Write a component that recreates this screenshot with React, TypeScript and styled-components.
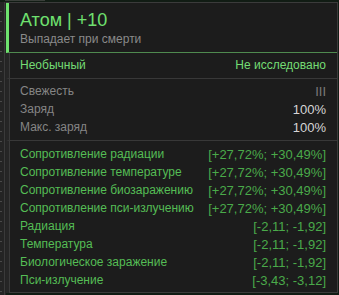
import React from "react";
import styled, { createGlobalStyle } from "styled-components";

const GlobalStyle = createGlobalStyle`
  html, body { margin: 0; padding: 0; background: #111c14; }
  body { font-family: "Liberation Sans", Arial, sans-serif; }
`;

const Frame = styled.div`
  width: 339px;
  height: 295px;
  display: flex;
  flex-direction: column;
  background: #111c14;
  overflow: hidden;
`;

const TopStrip = styled.div`
  height: 2px;
  display: flex;
`;

const TabHint = styled.div`
  width: 40px;
  margin-left: 5px;
  height: 1px;
  background: #3a3f3a;
`;

const Body = styled.div`
  flex: 1;
  display: flex;
  min-height: 0;
`;

const Ruler = styled.div`
  width: 6px;
  background:
    repeating-linear-gradient(to bottom, transparent 0 9px, #4a4a4a 9px 10px) 0 0 / 2px 100% no-repeat,
    linear-gradient(#3a3a3a, #3a3a3a) 4px 0 / 1px 100% no-repeat,
    #242424;
`;

const Panel = styled.div`
  flex: 1;
  display: flex;
  flex-direction: column;
  background: #1c1c1c;
  border-top: 1px solid #3b3b3b;
  border-right: 1px solid #3b3b3b;
  border-bottom: 1px solid #3b3b3b;
  margin-bottom: 2px;
`;

const Gutter = styled.div`
  width: 1px;
`;

const Header = styled.div`
  display: flex;
  flex-direction: column;
  border-left: 3px solid #6ee26e;
  padding: 6px 11px 5px 11px;
  border-bottom: 1px solid #4f8a4f;
`;

const Title = styled.div`
  font-size: 18px;
  line-height: 22px;
  color: #6fe06f;
`;

const Subtitle = styled.div`
  font-size: 12px;
  line-height: 16px;
  color: #8a8a8a;
`;

const Section = styled.div<{ $divider?: boolean; $pt: number; $pb: number }>`
  display: flex;
  flex-direction: column;
  padding: ${(p) => p.$pt}px 11px ${(p) => p.$pb}px 11px;
  border-left: 3px solid #262626;
  box-shadow: inset 1px 0 0 #3a3a3a;
  border-bottom: ${(p) => (p.$divider ? "1px solid #383838" : "none")};
  flex: ${(p) => (p.$divider ? "none" : "1")};
`;

const Row = styled.div<{ $h: number }>`
  display: flex;
  justify-content: space-between;
  align-items: center;
  height: ${(p) => p.$h}px;
  font-size: 12px;
  white-space: nowrap;
`;

const Label = styled.span<{ $tone: "rarity" | "muted" | "green" }>`
  color: ${(p) =>
    p.$tone === "rarity" ? "#74dc74" : p.$tone === "muted" ? "#858585" : "#55bd55"};
`;

const Value = styled.span<{ $tone: "rarity" | "muted" | "white" | "green" }>`
  font-size: ${(p) => (p.$tone === "rarity" ? "12px" : "13px")};
  color: ${(p) =>
    p.$tone === "rarity"
      ? "#74dc74"
      : p.$tone === "muted"
      ? "#7a7a7a"
      : p.$tone === "white"
      ? "#d6d6d6"
      : "#4aaa4a"};
`;

const stats = [
  { label: "Свежесть", value: "III", tone: "muted" as const },
  { label: "Заряд", value: "100%", tone: "white" as const },
  { label: "Макс. заряд", value: "100%", tone: "white" as const },
];

const effects = [
  ["Сопротивление радиации", "[+27,72%; +30,49%]"],
  ["Сопротивление температуре", "[+27,72%; +30,49%]"],
  ["Сопротивление биозаражению", "[+27,72%; +30,49%]"],
  ["Сопротивление пси-излучению", "[+27,72%; +30,49%]"],
  ["Радиация", "[-2,11; -1,92]"],
  ["Температура", "[-2,11; -1,92]"],
  ["Биологическое заражение", "[-2,11; -1,92]"],
  ["Пси-излучение", "[-3,43; -3,12]"],
];

export default function App() {
  return (
    <>
      <GlobalStyle />
      <Frame>
        <TopStrip>
          <TabHint />
        </TopStrip>
        <Body>
          <Ruler />
          <Panel>
            <Header>
              <Title>Атом | +10</Title>
              <Subtitle>Выпадает при смерти</Subtitle>
            </Header>
            <Section $divider $pt={4} $pb={5}>
              <Row $h={16}>
                <Label $tone="rarity">Необычный</Label>
                <Value $tone="rarity">Не исследовано</Value>
              </Row>
            </Section>
            <Section $divider $pt={3} $pb={4}>
              {stats.map((s) => (
                <Row key={s.label} $h={18}>
                  <Label $tone="muted">{s.label}</Label>
                  <Value $tone={s.tone}>{s.value}</Value>
                </Row>
              ))}
            </Section>
            <Section $pt={4} $pb={4}>
              {effects.map(([l, v]) => (
                <Row key={l} $h={18}>
                  <Label $tone="green">{l}</Label>
                  <Value $tone="green">{v}</Value>
                </Row>
              ))}
            </Section>
          </Panel>
          <Gutter />
        </Body>
      </Frame>
    </>
  );
}
